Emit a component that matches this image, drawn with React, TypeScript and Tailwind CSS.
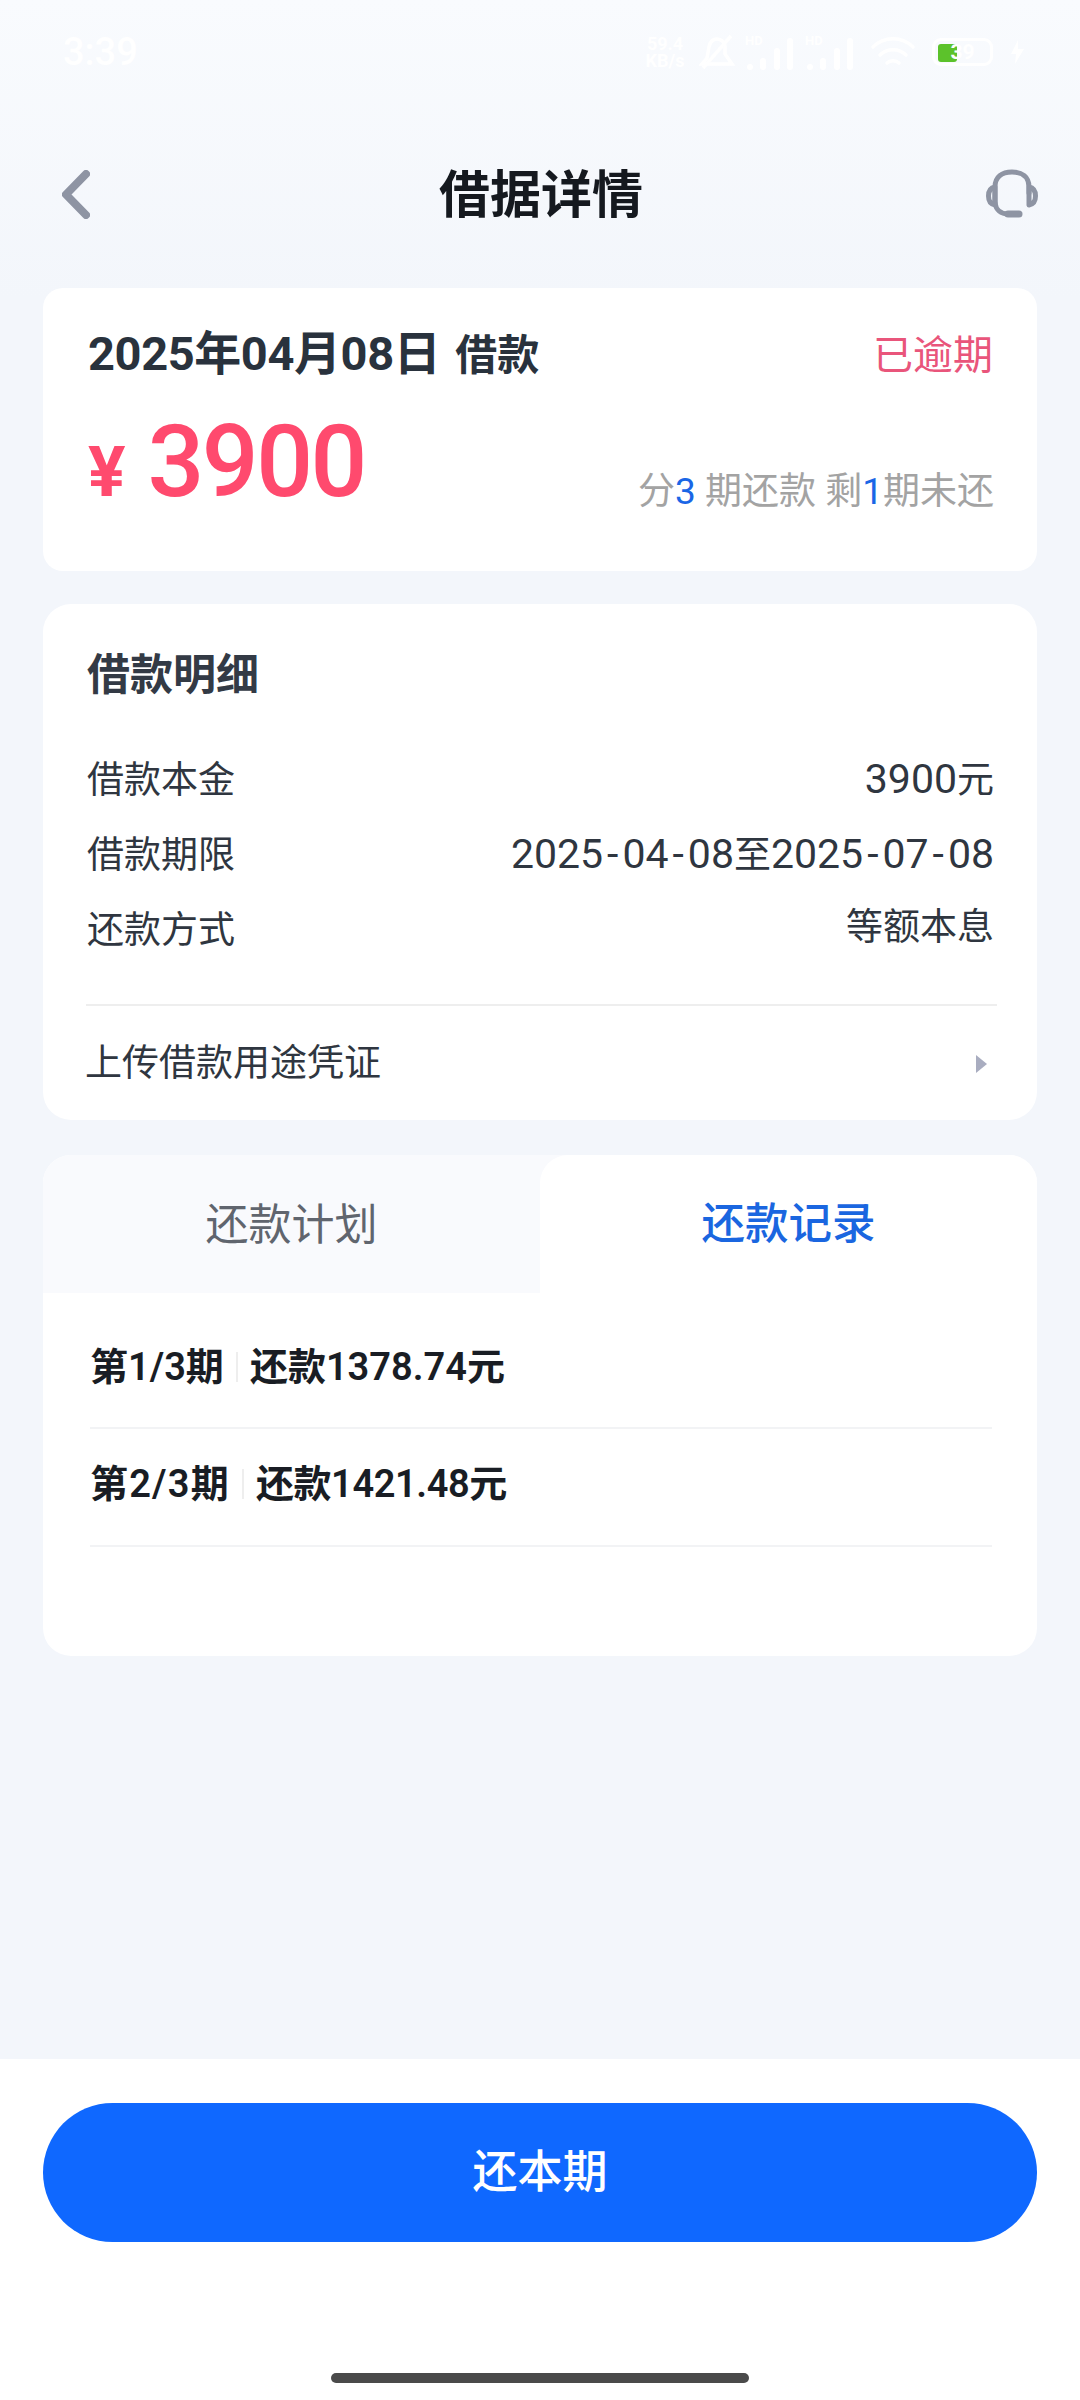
import React from 'react'

const StatusBar = () => (
  <div className="h-[104px] flex items-center justify-between pl-[63px] pr-[55px] text-white">
    <div className="text-[38px] leading-none font-medium">3:39</div>
    <div className="flex items-center">
      <div className="w-[48px] text-[18px] leading-[17px] font-bold text-center">
        <div>59.4</div>
        <div>KB/s</div>
      </div>
      {/* 静音 */}
      <svg className="ml-[10px]" width="36" height="36" viewBox="0 0 36 36" fill="none" stroke="#fff" strokeWidth="3.5">
        <path d="M3 30 H33 L26 20 V13 C26 8 22 5 18 5 C14 5 11 8 10 13 L8 24 Z" />
        <path d="M4 34 L32 2" />
      </svg>
      {/* 信号 */}
      {[0, 1].map((i) => (
        <div key={i} className="relative w-[50px] h-[36px] ml-[10px] flex items-end justify-between px-[2px]">
          <div className="absolute left-0 top-0 text-[13px] leading-none font-bold">HD</div>
          <div className="w-[6px] h-[6px] bg-white rounded-sm"></div>
          <div className="w-[6px] h-[12px] bg-white rounded-sm"></div>
          <div className="w-[6px] h-[22px] bg-white rounded-sm"></div>
          <div className="w-[6px] h-[32px] bg-white rounded-sm"></div>
        </div>
      ))}
      {/* wifi */}
      <svg className="ml-[15px]" width="46" height="36" viewBox="0 0 46 36" fill="none" stroke="#fff" strokeWidth="3.5" strokeLinecap="round">
        <path d="M3 13 C14 2 32 2 43 13" />
        <path d="M10 21 C17 14 29 14 36 21" />
        <path d="M17 29 C20 26 26 26 29 29" />
      </svg>
      {/* 电量 */}
      <div className="relative w-[61px] h-[28px] ml-[16px] border-[3px] border-white rounded-[9px]">
        <div className="absolute left-[3px] top-[3px] w-[19px] h-[18px] bg-[#5cc22b] rounded-[3px]"></div>
        <div className="absolute inset-0 flex items-center justify-center text-[21px] leading-none font-bold">39</div>
      </div>
      <svg className="ml-[17px]" width="15" height="26" viewBox="0 0 15 26" fill="#fff">
        <path d="M8 1 L1 15 H6 L5 25 L14 10 H8 Z" />
      </svg>
    </div>
  </div>
)

const NavBar = () => (
  <div className="h-[180px] flex items-center justify-between pl-[62px] pr-[42px]">
    <svg width="28" height="49" viewBox="0 0 28 49" fill="none" stroke="#8e94a3" strokeWidth="8" strokeLinecap="round" strokeLinejoin="round">
      <path d="M24 4 L4 24.5 L24 45" />
    </svg>
    <h1 className="mt-[2px] ml-[6px] text-[51px] leading-none font-bold text-[#15191f]">借据详情</h1>
    <svg width="52" height="50" viewBox="0 0 52 50" fill="none" stroke="#8e94a3" strokeLinecap="round" strokeLinejoin="round">
      <path d="M9 34 V18 C9 8 16 3 26 3 C36 3 43 8 43 18 V24" strokeWidth="5" />
      <path d="M9 34 C10 41 15 45 22 45" strokeWidth="5" />
      <path d="M22 45 H33" strokeWidth="7" />
      <path d="M9 18 C4 19 2.5 23 2.5 27 C2.5 31 4 35 9 36 Z" strokeWidth="5" />
      <path d="M43 18 C48 19 49.5 23 49.5 27 C49.5 31 48 35 43 36 Z" strokeWidth="5" />
    </svg>
  </div>
)

const DetailRow = ({ label, children }: { label: string; children: React.ReactNode }) => (
  <div className="h-[75px] flex items-center justify-between text-[37px] leading-none text-[#2f3640]">
    <span>{label}</span>
    {children}
  </div>
)

const Dash = () => <span className="px-[4px]">-</span>

const App = () => {
  return (
    <div className="w-[1080px] h-[2400px] flex flex-col bg-[#f3f6fb] bg-gradient-to-b from-[#f9fbfe] to-[#f3f6fb] bg-[length:100%_300px] bg-no-repeat font-[Roboto,'Noto_Sans_CJK_SC',sans-serif]">
      <StatusBar />
      <NavBar />

      <div className="flex-1 flex flex-col px-[43px] pt-[4px]">
        {/* 借款概览 */}
        <div className="h-[283px] bg-white rounded-[20px] pl-[45px] pr-[44px] pt-[40px]">
          <div className="flex items-center justify-between h-[50px]">
            <div className="text-[#29323d] font-bold text-[47px] leading-none tracking-[-0.4px]">
              2025年04月08日<span className="ml-[15px] text-[42px] tracking-normal">借款</span>
            </div>
            <div className="mt-[6px] text-[#e9557b] text-[40px] leading-none">已逾期</div>
          </div>
          <div className="flex items-end justify-between mt-[34px]">
            <div className="flex items-baseline text-[#ff4a6e] font-medium leading-none">
              <span className="text-[70px] font-bold">¥</span>
              <span className="text-[100px] ml-[22px] tracking-[-2.5px]">3900</span>
            </div>
            <div className="text-[37px] leading-none text-[#a3a3a3] mb-[2px] -mr-[1px]">
              分<span className="text-[#1a66e6]">3</span> 期还款 剩<span className="text-[#1a66e6]">1</span>期未还
            </div>
          </div>
        </div>

        {/* 借款明细 */}
        <div className="h-[516px] mt-[33px] bg-white rounded-[28px] pl-[44px] pr-[43px] pt-[50px]">
          <div className="text-[43px] leading-none font-bold text-[#333a45]">借款明细</div>
          <div className="mt-[46px]">
            <DetailRow label="借款本金">
              <span className="mb-[2px] text-[41px]">3900<span className="text-[37px]">元</span></span>
            </DetailRow>
            <DetailRow label="借款期限">
              <span className="mb-[2px] text-[41px]">
                2025<Dash />04<Dash />08<span className="text-[37px]">至</span>2025<Dash />07<Dash />08
              </span>
            </DetailRow>
            <DetailRow label="还款方式">
              <span className="mb-[6px]">等额本息</span>
            </DetailRow>
          </div>
          <div className="mt-[36px] -ml-[1px] -mr-[3px] h-[2px] bg-[#eeeeee]"></div>
          <div className="h-[115px] -ml-[2px] pr-[7px] flex items-center justify-between text-[37px] leading-none text-[#2f3640]">
            <span>上传借款用途凭证</span>
            <div className="w-0 h-0 border-y-[9px] border-y-transparent border-l-[11px] border-l-[#a9adc0]"></div>
          </div>
        </div>

        {/* 还款记录 */}
        <div className="h-[501px] mt-[35px] bg-white rounded-[28px] overflow-hidden">
          <div className="grid grid-cols-2 h-[138px] bg-[#f9fafd] leading-none">
            <div className="pt-[2px] flex items-center justify-center text-[43px] text-[#60656e]">还款计划</div>
            <div className="pt-[2px] flex items-center justify-center bg-white rounded-tl-[28px] text-[43.5px] font-medium text-[#1a66e0]">还款记录</div>
          </div>
          <div className="pl-[47px] pr-[45px] text-[38px] leading-none font-semibold text-[#191d24]">
            <div className="h-[136px] pt-[14px] flex items-center border-b-2 border-[#f2f3f5]">
              <span>第1/3期</span>
              <span className="w-[2px] h-[30px] mx-[12px] bg-[#eeeeee]"></span>
              <span>还款1378.74元</span>
            </div>
            <div className="h-[118px] pb-[6px] flex items-center border-b-2 border-[#f2f3f5]">
              <span className="tracking-[1.2px]">第2/3期</span>
              <span className="w-[2px] h-[30px] mx-[12px] bg-[#eeeeee]"></span>
              <span className="tracking-[-0.4px]">还款1421.48元</span>
            </div>
          </div>
        </div>
      </div>

      {/* 底部按钮 */}
      <div className="h-[341px] bg-white flex flex-col items-center px-[43px] pt-[44px]">
        <button className="w-full h-[139px] rounded-full bg-[#0f68ff] text-white text-[45px] font-medium leading-none">还本期</button>
        <div className="mt-[131px] w-[418px] h-[10px] rounded-[5px] bg-[#4a4a4a]"></div>
      </div>
    </div>
  )
}

export default App
